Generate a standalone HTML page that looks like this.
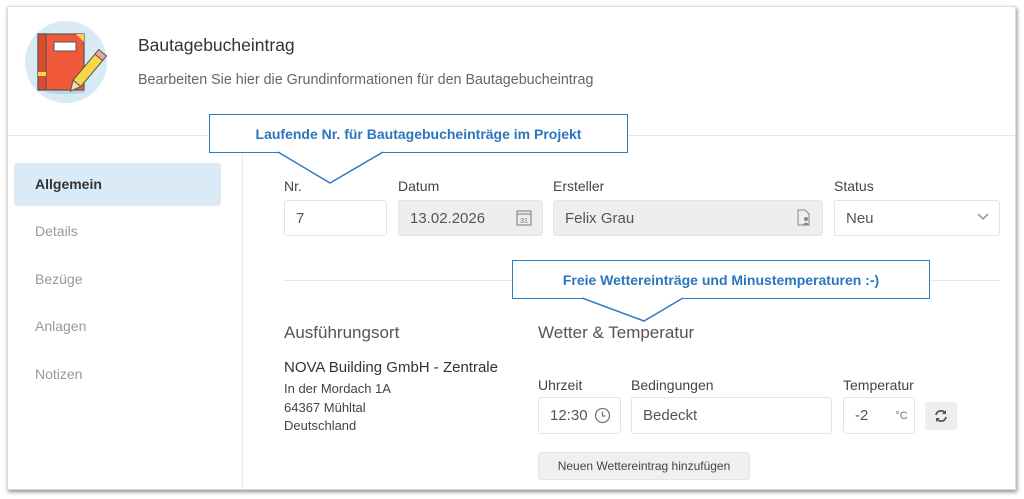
<!DOCTYPE html>
<html><head><meta charset="utf-8"><style>
*{box-sizing:border-box;margin:0;padding:0}
body{width:1024px;height:499px;background:#fff;font-family:"Liberation Sans",sans-serif;color:#333;position:relative;overflow:hidden}
.a{position:absolute}
.card{left:7px;top:6px;width:1009px;height:484px;background:#fff;box-shadow:1px 2px 4px rgba(0,0,0,.45);border:1px solid #ddd}
.lbl{font-size:14px;color:#444}
.inp{border:1px solid #e2e4e6;border-radius:3px;background:#fff;font-size:15px;color:#555;padding-left:11px;display:flex;align-items:center}
.dis{background:#eceeef;border-color:#e2e4e6}
.nav{font-size:14px;color:#999;left:35px}
.call{border:1.5px solid #2e7cbf;background:#fff;color:#2a76bd;font-weight:bold;font-size:14px;display:flex;align-items:center;justify-content:center}
</style></head><body>
<div class="a card"></div>
<svg class="a" style="left:24px;top:20px" width="84" height="84" viewBox="0 0 84 84">
<circle cx="42" cy="42" r="41" fill="#d8eaf5"/>
<ellipse cx="42" cy="72" rx="20" ry="2" fill="#c2d2dc"/>
<rect x="14" y="14" width="46" height="56" fill="#f05a3a" stroke="#555" stroke-width="1.2"/>
<rect x="14" y="14" width="8" height="56" fill="#e04a2c" stroke="#555" stroke-width="1.2"/>
<rect x="14" y="52" width="8" height="4" fill="#f7d64a"/>
<polygon points="52,14 60,14 60,22" fill="#f7d64a"/>
<rect x="30" y="22" width="22" height="9" fill="#fff" stroke="#555"/>
<g transform="rotate(40 60 55)"><rect x="55" y="30" width="10" height="36" fill="#f7d64a" stroke="#555"/><rect x="55" y="26" width="10" height="6" fill="#f3a0a0" stroke="#555"/><polygon points="55,66 65,66 60,76" fill="#f6dcb0" stroke="#555"/></g>
</svg>
<div class="a" style="left:138px;top:35px;font-size:17.5px;color:#333">Bautagebucheintrag</div>
<div class="a" style="left:138px;top:72px;font-size:14.3px;color:#666">Bearbeiten Sie hier die Grundinformationen für den Bautagebucheintrag</div>
<div class="a" style="left:8px;top:135px;width:1007px;height:1px;background:#e8e8e8"></div>
<div class="a" style="left:242px;top:136px;width:1px;height:353px;background:#e8e8e8"></div>
<div class="a" style="left:14px;top:163px;width:207px;height:43px;background:#dbeaf7;border-radius:3px"></div>
<div class="a" style="left:35px;top:176px;font-size:14px;font-weight:bold;color:#333">Allgemein</div>
<div class="a nav" style="top:223px">Details</div>
<div class="a nav" style="top:271px">Bezüge</div>
<div class="a nav" style="top:318px">Anlagen</div>
<div class="a nav" style="top:366px">Notizen</div>

<div class="a lbl" style="left:284px;top:178px">Nr.</div>
<div class="a lbl" style="left:398px;top:178px">Datum</div>
<div class="a lbl" style="left:553px;top:178px">Ersteller</div>
<div class="a lbl" style="left:834px;top:178px">Status</div>
<div class="a inp" style="left:284px;top:200px;width:103px;height:36px">7</div>
<div class="a inp dis" style="left:398px;top:200px;width:145px;height:36px">13.02.2026</div>
<svg class="a" style="left:516px;top:209px" width="16" height="17" viewBox="0 0 16 17"><rect x="1" y="2" width="14" height="14" fill="none" stroke="#777"/><line x1="1" y1="5" x2="15" y2="5" stroke="#777"/><text x="8" y="14" font-size="7" text-anchor="middle" fill="#777" font-family="Liberation Sans">31</text></svg>
<div class="a inp dis" style="left:553px;top:200px;width:270px;height:36px">Felix Grau</div>
<svg class="a" style="left:796px;top:209px" width="15" height="17" viewBox="0 0 15 17"><path d="M2 1h7l4 4v11H2z" fill="none" stroke="#888"/><circle cx="10" cy="10" r="2" fill="#888"/><path d="M7 16c0-3 6-3 6 0z" fill="#888"/></svg>
<div class="a inp" style="left:834px;top:200px;width:166px;height:36px">Neu</div>
<svg class="a" style="left:976px;top:212px" width="14" height="10"><path d="M2 2l5 5 5-5" fill="none" stroke="#888" stroke-width="1.3"/></svg>

<div class="a" style="left:284px;top:280px;width:716px;height:1px;background:#e8e8e8"></div>
<div class="a" style="left:284px;top:323px;font-size:17px;color:#555">Ausführungsort</div>
<div class="a" style="left:538px;top:323px;font-size:17px;color:#555">Wetter &amp; Temperatur</div>
<div class="a" style="left:284px;top:359px;font-size:15px;color:#333">NOVA Building GmbH - Zentrale</div>
<div class="a" style="left:284px;top:380px;font-size:13px;color:#444;line-height:18.5px">In der Mordach 1A<br>64367 Mühltal<br>Deutschland</div>

<div class="a lbl" style="left:538px;top:377px">Uhrzeit</div>
<div class="a lbl" style="left:631px;top:377px">Bedingungen</div>
<div class="a lbl" style="left:843px;top:377px">Temperatur</div>
<div class="a inp" style="left:538px;top:397px;width:83px;height:37px">12:30</div>
<svg class="a" style="left:594px;top:407px" width="17" height="17" viewBox="0 0 17 17"><circle cx="8.5" cy="8.5" r="7" fill="none" stroke="#777" stroke-width="1.3"/><path d="M8.5 4.5v4.5h3" fill="none" stroke="#777" stroke-width="1.3"/></svg>
<div class="a inp" style="left:631px;top:397px;width:201px;height:37px">Bedeckt</div>
<div class="a inp" style="left:843px;top:397px;width:72px;height:37px">-2<span style="font-size:11px;color:#777;margin-left:27px">°C</span></div>
<div class="a" style="left:925px;top:402px;width:32px;height:28px;background:#eceeef;border-radius:3px"></div>
<svg class="a" style="left:934px;top:409px" width="14" height="14" viewBox="0 0 14 14"><path d="M2 6a5 5 0 0 1 9-2M12 8a5 5 0 0 1-9 2" fill="none" stroke="#555" stroke-width="1.8"/><path d="M12 1v4h-4zM2 13V9h4z" fill="#555"/></svg>
<div class="a" style="left:538px;top:452px;width:212px;height:28px;background:#eef0f1;border:1px solid #e2e4e6;border-radius:3px;font-size:12px;color:#444;display:flex;align-items:center;justify-content:center">Neuen Wettereintrag hinzufügen</div>

<div class="a call" style="left:209px;top:114px;width:419px;height:39px">Laufende Nr. für Bautagebucheinträge im Projekt</div>
<svg class="a" style="left:270px;top:151px" width="120" height="35"><polygon points="8,1 113,1 60,32" fill="#fff"/><polyline points="8,1 60,32 113,1" fill="none" stroke="#2e7cbf" stroke-width="1.5"/></svg>
<div class="a call" style="left:512px;top:260px;width:418px;height:39px">Freie Wettereinträge und Minustemperaturen :-)</div>
<svg class="a" style="left:570px;top:297px" width="120" height="28"><polygon points="12,1 113,1 74,24" fill="#fff"/><polyline points="12,1 74,24 113,1" fill="none" stroke="#2e7cbf" stroke-width="1.5"/></svg>
</body></html>
